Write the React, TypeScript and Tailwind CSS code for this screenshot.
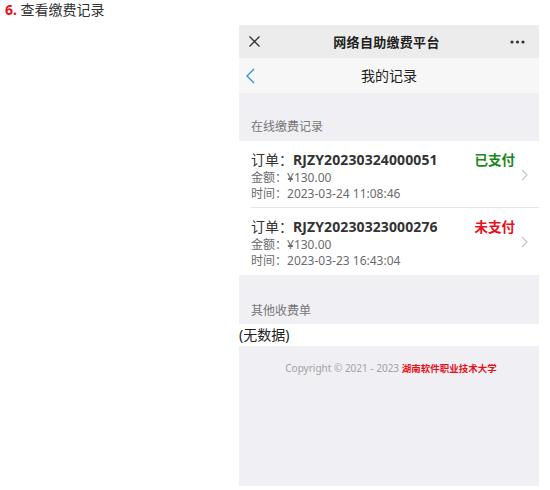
import React from "react";

interface Order {
    id: string;
    amount: string;
    time: string;
    paid: boolean;
}

const orders: Order[] = [
    { id: "RJZY20230324000051", amount: "¥130.00", time: "2023-03-24 11:08:46", paid: true },
    { id: "RJZY20230323000276", amount: "¥130.00", time: "2023-03-23 16:43:04", paid: false },
];

const font = { fontFamily: '"Noto Sans", "Noto Sans CJK SC", sans-serif' };

// 订单 한 줄
const OrderRow = ({ order, last }: { order: Order; last: boolean }) => (
    <div className="relative h-[67px] pl-[12px] bg-white">
        <div className={`h-full pt-[9px] pr-[12px] ${last ? '' : 'border-b border-[#e6e6e6]'}`}>
            <div className="flex items-center justify-between h-[20px]">
                <p className="text-[14px] leading-[20px] text-[#333]">
                    订单：<span className="font-bold tracking-[0.1px]">{order.id}</span>
                </p>
                <span className={`text-[13.5px] font-bold leading-[20px] mr-[12px] ${order.paid ? 'text-[#17871a]' : 'text-[#e8111b]'}`}>
                    {order.paid ? '已支付' : '未支付'}
                </span>
            </div>
            <p className="text-[12px] leading-[16px] text-[#6b6b6b]">金额：{order.amount}</p>
            <p className="text-[12px] leading-[16px] text-[#6b6b6b]">时间：{order.time}</p>
        </div>
        <svg className="absolute right-[11px] top-[28px]" width="7" height="12" viewBox="0 0 7 12" fill="none">
            <path d="M1 1l5 5-5 5" stroke="#c4c4c4" strokeWidth="1.1" />
        </svg>
    </div>
);

export default function App() {
    return (
        <div className="w-[550px] h-[490px] bg-white overflow-hidden" style={font}>
            {/* 제목 */}
            <div className="h-[25px] pl-[5px] pt-[1px] text-[14px] leading-[18px] text-[#333]">
                <span className="text-[#e8111b] font-bold">6.</span> 查看缴费记录
            </div>

            {/* 휴대폰 화면 */}
            <div className="ml-[239px] w-[300px] h-[461px] bg-[#efeff4] flex flex-col">
                <div className="h-[33px] bg-[#ececec] flex items-center justify-between px-[10px]">
                    <svg width="11" height="11" viewBox="0 0 11 11">
                        <path d="M0.5 0.5l10 10M10.5 0.5l-10 10" stroke="#333" strokeWidth="1.3" />
                    </svg>
                    <span className="text-[13px] font-bold text-[#222] leading-[18px] ml-[3px] tracking-[0.3px]">网络自助缴费平台</span>
                    <svg width="15" height="4" viewBox="0 0 15 4" className="mr-[4px]">
                        <circle cx="2" cy="2" r="1.6" fill="#333" />
                        <circle cx="7.5" cy="2" r="1.6" fill="#333" />
                        <circle cx="13" cy="2" r="1.6" fill="#333" />
                    </svg>
                </div>
                <div className="relative h-[35px] bg-[#f7f7f7] flex items-center justify-center">
                    <svg className="absolute left-[7px] top-[10px]" width="9" height="16" viewBox="0 0 9 16" fill="none">
                        <path d="M8 1L1 8l7 7" stroke="#2b95dd" strokeWidth="1.3" />
                    </svg>
                    <span className="text-[14px] text-[#222] leading-[20px]">我的记录</span>
                </div>

                <div className="h-[48px] flex items-end pb-[6px] pl-[12px] text-[12px] leading-[16px] text-[#777]">在线缴费记录</div>
                {orders.map((o, i) => (
                    <OrderRow key={o.id} order={o} last={i === orders.length - 1} />
                ))}

                <div className="h-[49px] flex items-end pb-[5px] pl-[12px] text-[12px] leading-[16px] text-[#777]">其他收费单</div>
                <div className="h-[22px] bg-white text-[14px] leading-[22px] text-[#222]">(无数据)</div>

                <p className="pt-[15px] text-center text-[10px] leading-[14px] text-[#a3a3a3] pl-[4px]">
                    Copyright © 2021 - 2023 <span className="text-[9.5px] text-[#e8111b] font-bold">湖南软件职业技术大学</span>
                </p>
            </div>
        </div>
    );
}
